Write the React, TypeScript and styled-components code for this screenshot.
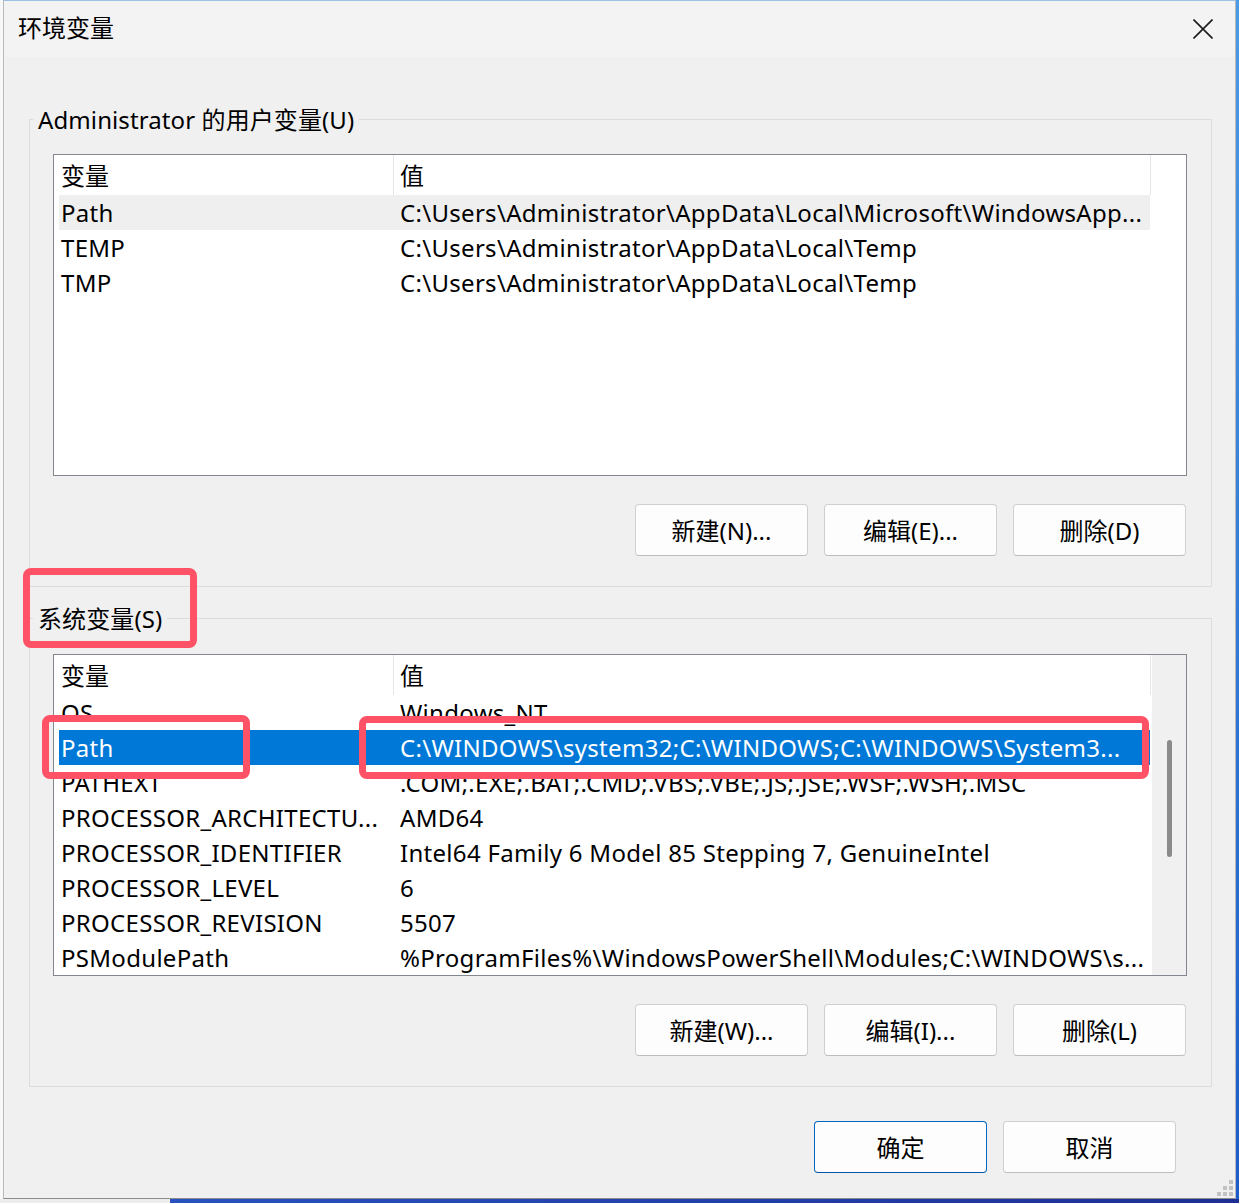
import React from "react";
import styled, { createGlobalStyle } from "styled-components";

const GlobalStyle = createGlobalStyle`
  html, body {
    margin: 0;
    padding: 0;
  }
  body {
    background: #f0f0f0;
    font-family: "Noto Sans", "Noto Sans CJK SC", sans-serif;
    color: #000;
  }
`;

const Screen = styled.div`
  width: 1239px;
  height: 1203px;
  display: flex;
  flex-direction: column;
  overflow: hidden;
`;

const Desk = styled.div`
  display: flex;
  height: 1199px;
`;

const BehindEdge = styled.div`
  width: 3px;
  background: #f8f8f8;
`;

const DesktopEdge = styled.div`
  width: 3px;
  background: linear-gradient(#4a9be6, #1c5ccb);
`;

const BottomEdge = styled.div`
  height: 4px;
  display: flex;
  background: linear-gradient(90deg, #2a57c8, #1d2f94);
`;

const BottomGap = styled.div`
  width: 170px;
  background: #ededed;
`;

const Window = styled.div`
  position: relative;
  width: 1233px;
  box-sizing: border-box;
  border: 1px solid #b9b9b9;
  border-top-color: #9cc1e6;
  border-bottom-color: #8c8c8c;
  background: #f0f0f0;
  display: flex;
  flex-direction: column;
`;

const TitleBar = styled.div`
  height: 56px;
  flex-shrink: 0;
  background: #f3f3f3;
  display: flex;
  align-items: center;
  justify-content: space-between;
  padding: 0 22px 0 14px;
`;

const Title = styled.div`
  font-size: 24px;
  line-height: 30px;
  margin-top: -2px;
`;

const CloseBox = styled.div`
  width: 20px;
  height: 20px;
  display: flex;
`;

const Body = styled.div`
  display: flex;
  flex-direction: column;
  padding: 0 23px 0 25px;
`;

const Group = styled.div<{ $top: number; $padTop: number }>`
  position: relative;
  margin-top: ${(p) => p.$top}px;
  border: 1px solid #dcdcdc;
  padding: ${(p) => p.$padTop}px 24px 30px 23px;
  display: flex;
  flex-direction: column;
`;

const Legend = styled.div`
  position: absolute;
  top: -14px;
  left: 3px;
  padding: 0 5px;
  background: #f0f0f0;
  font-size: 24px;
  line-height: 28px;
  letter-spacing: 0.1px;
  white-space: nowrap;
`;

const ListBox = styled.div`
  height: 322px;
  box-sizing: border-box;
  border: 1px solid #828790;
  background: #fff;
  display: flex;
  margin-bottom: 28px;
`;

const ListMain = styled.div`
  flex: 1;
  padding-left: 5px;
  display: flex;
  flex-direction: column;
  overflow: hidden;
`;

const HeaderRow = styled.div`
  display: flex;
  height: 40px;
  flex-shrink: 0;
`;

const HeaderCell = styled.div<{ $w: number; $pad: number }>`
  width: ${(p) => p.$w}px;
  box-sizing: border-box;
  padding-left: ${(p) => p.$pad}px;
  border-right: 1px solid #e5e5e5;
  font-size: 24px;
  line-height: 42px;
`;

const Row = styled.div<{ $state?: "active" | "soft" }>`
  display: flex;
  width: 1091px;
  height: 35px;
  flex-shrink: 0;
  background: ${(p) =>
    p.$state === "active" ? "#0078d7" : p.$state === "soft" ? "#efefef" : "transparent"};
  color: ${(p) => (p.$state === "active" ? "#fff" : "#000")};
`;

const Cell = styled.div<{ $w?: number; $pad: number }>`
  ${(p) => (p.$w ? `width: ${p.$w}px; flex-shrink: 0;` : "flex: 1;")}
  box-sizing: border-box;
  padding-left: ${(p) => p.$pad}px;
  font-size: 24px;
  line-height: 35px;
  letter-spacing: 0.3px;
  white-space: nowrap;
  overflow: hidden;
`;

const ScrollTrack = styled.div`
  width: 34px;
  margin-left: 1px;
  background: #f0f0f0;
  display: flex;
  justify-content: center;
  padding-top: 85px;
  box-sizing: border-box;
`;

const ScrollThumb = styled.div`
  width: 5px;
  height: 117px;
  border-radius: 3px;
  background: #8a8a8a;
`;

const ButtonRow = styled.div`
  display: flex;
  justify-content: flex-end;
  gap: 16px;
  margin-right: 1px;
`;

const DlgButton = styled.button<{ $primary?: boolean }>`
  width: 173px;
  height: 52px;
  padding: 0 0 2px;
  box-sizing: border-box;
  border: 1px solid ${(p) => (p.$primary ? "#0067c0" : "#d0d0d0")};
  border-bottom-color: ${(p) => (p.$primary ? "#0058a8" : "#bdbdbd")};
  border-radius: 4px;
  background: #fdfdfd;
  font-family: inherit;
  font-size: 24px;
  color: #000;
`;

const Footer = styled.div`
  margin-top: 34px;
  display: flex;
  justify-content: flex-end;
  padding-right: 58px;
`;

const Mark = styled.div`
  position: absolute;
  box-sizing: border-box;
  border: 7px solid #ff5267;
  border-radius: 8px;
  pointer-events: none;
`;

const Grip = styled.div`
  position: absolute;
  right: 2px;
  bottom: 2px;
  width: 16px;
  height: 16px;
  display: flex;
`;

type Item = { name: string; value: string; state?: "active" | "soft" };

const userVars: Item[] = [
  { name: "Path", value: "C:\\Users\\Administrator\\AppData\\Local\\Microsoft\\WindowsApp...", state: "soft" },
  { name: "TEMP", value: "C:\\Users\\Administrator\\AppData\\Local\\Temp" },
  { name: "TMP", value: "C:\\Users\\Administrator\\AppData\\Local\\Temp" },
];

const sysVars: Item[] = [
  { name: "OS", value: "Windows_NT" },
  { name: "Path", value: "C:\\WINDOWS\\system32;C:\\WINDOWS;C:\\WINDOWS\\System3...", state: "active" },
  { name: "PATHEXT", value: ".COM;.EXE;.BAT;.CMD;.VBS;.VBE;.JS;.JSE;.WSF;.WSH;.MSC" },
  { name: "PROCESSOR_ARCHITECTU...", value: "AMD64" },
  { name: "PROCESSOR_IDENTIFIER", value: "Intel64 Family 6 Model 85 Stepping 7, GenuineIntel" },
  { name: "PROCESSOR_LEVEL", value: "6" },
  { name: "PROCESSOR_REVISION", value: "5507" },
  { name: "PSModulePath", value: "%ProgramFiles%\\WindowsPowerShell\\Modules;C:\\WINDOWS\\s..." },
];

function VarList({ items, scroll }: { items: Item[]; scroll?: boolean }) {
  return (
    <ListBox>
      <ListMain>
        <HeaderRow>
          <HeaderCell $w={335} $pad={2}>变量</HeaderCell>
          <HeaderCell $w={757} $pad={6}>值</HeaderCell>
        </HeaderRow>
        {items.map((it) => (
          <Row key={it.name} $state={it.state}>
            <Cell $w={335} $pad={2}>{it.name}</Cell>
            <Cell $pad={6}>{it.value}</Cell>
          </Row>
        ))}
      </ListMain>
      {scroll && (
        <ScrollTrack>
          <ScrollThumb />
        </ScrollTrack>
      )}
    </ListBox>
  );
}

export default function App() {
  return (
    <>
      <GlobalStyle />
      <Screen>
        <Desk>
          <BehindEdge />
          <Window>
            <TitleBar>
              <Title>环境变量</Title>
              <CloseBox>
                <svg width="20" height="20" viewBox="0 0 20 20">
                  <path d="M0.5 0.5 L19.5 19.5 M19.5 0.5 L0.5 19.5" stroke="#1b1b1b" strokeWidth="1.6" fill="none" />
                </svg>
              </CloseBox>
            </TitleBar>

            <Body>
              {/* user variables */}
              <Group $top={62} $padTop={34}>
                <Legend>Administrator 的用户变量(U)</Legend>
                <VarList items={userVars} />
                <ButtonRow>
                  <DlgButton>新建(N)...</DlgButton>
                  <DlgButton>编辑(E)...</DlgButton>
                  <DlgButton>删除(D)</DlgButton>
                </ButtonRow>
              </Group>

              {/* system variables */}
              <Group $top={31} $padTop={35}>
                <Legend>系统变量(S)</Legend>
                <VarList items={sysVars} scroll />
                <ButtonRow>
                  <DlgButton>新建(W)...</DlgButton>
                  <DlgButton>编辑(I)...</DlgButton>
                  <DlgButton>删除(L)</DlgButton>
                </ButtonRow>
              </Group>
            </Body>

            <Footer>
              <ButtonRow>
                <DlgButton $primary>确定</DlgButton>
                <DlgButton>取消</DlgButton>
              </ButtonRow>
            </Footer>

            {/* red annotation boxes */}
            <Mark style={{ left: 19, top: 567, width: 174, height: 80 }} />
            <Mark style={{ left: 38, top: 714, width: 208, height: 64 }} />
            <Mark style={{ left: 355, top: 715, width: 790, height: 63 }} />

            <Grip>
              <svg width="16" height="16" viewBox="0 0 16 16">
                <g fill="#c2c2c2">
                  <rect x="12" y="0" width="4" height="4" />
                  <rect x="6" y="6" width="4" height="4" />
                  <rect x="12" y="6" width="4" height="4" />
                  <rect x="0" y="12" width="4" height="4" />
                  <rect x="6" y="12" width="4" height="4" />
                  <rect x="12" y="12" width="4" height="4" />
                </g>
              </svg>
            </Grip>
          </Window>
          <DesktopEdge />
        </Desk>
        <BottomEdge>
          <BottomGap />
        </BottomEdge>
      </Screen>
    </>
  );
}
